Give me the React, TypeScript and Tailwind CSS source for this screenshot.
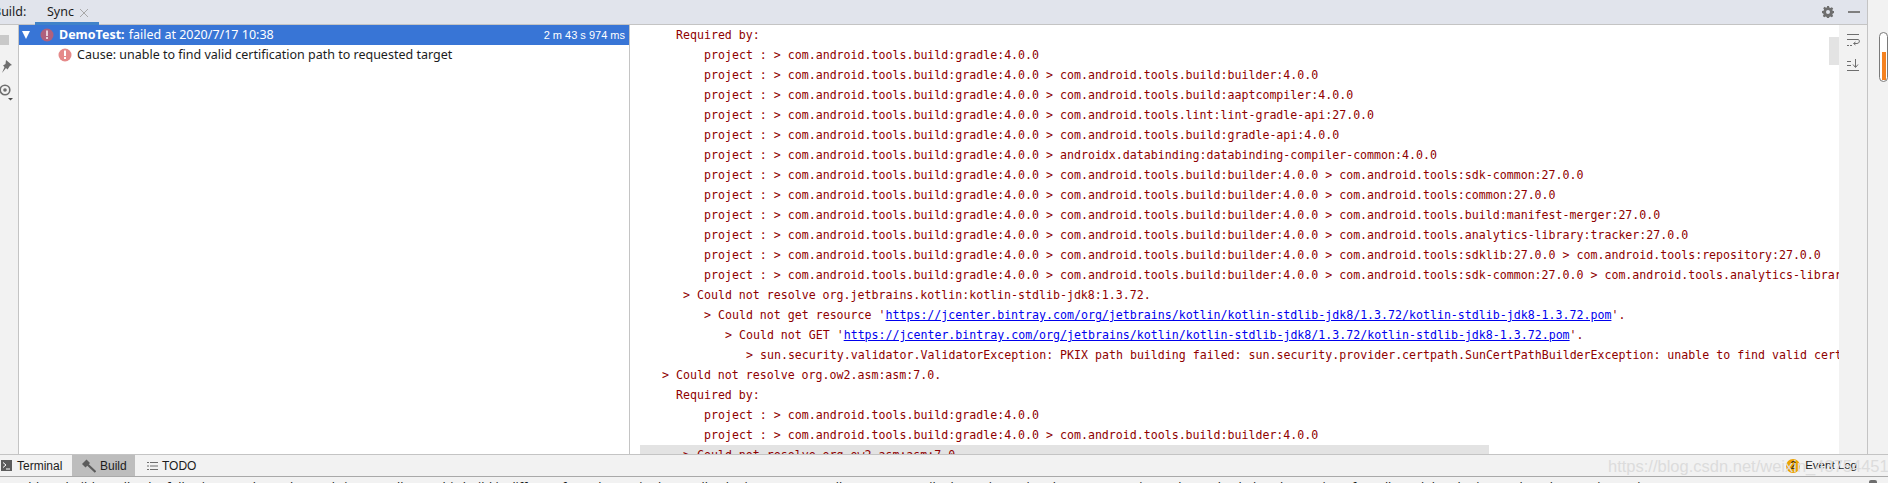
const gradle = 'project : > com.android.tools.build:gradle:4.0.0';
const builder = gradle + ' > com.android.tools.build:builder:4.0.0';
const pom = 'https://jcenter.bintray.com/org/jetbrains/kotlin/kotlin-stdlib-jdk8/1.3.72/kotlin-stdlib-jdk8-1.3.72.pom';

type Seg = { t: string; link?: boolean };

const lines: { indent: number; segs: Seg[] }[] = [
  { indent: 4, segs: [{ t: 'Required by:' }] },
  { indent: 8, segs: [{ t: gradle }] },
  { indent: 8, segs: [{ t: builder }] },
  { indent: 8, segs: [{ t: gradle + ' > com.android.tools.build:aaptcompiler:4.0.0' }] },
  { indent: 8, segs: [{ t: gradle + ' > com.android.tools.lint:lint-gradle-api:27.0.0' }] },
  { indent: 8, segs: [{ t: gradle + ' > com.android.tools.build:gradle-api:4.0.0' }] },
  { indent: 8, segs: [{ t: gradle + ' > androidx.databinding:databinding-compiler-common:4.0.0' }] },
  { indent: 8, segs: [{ t: builder + ' > com.android.tools:sdk-common:27.0.0' }] },
  { indent: 8, segs: [{ t: builder + ' > com.android.tools:common:27.0.0' }] },
  { indent: 8, segs: [{ t: builder + ' > com.android.tools.build:manifest-merger:27.0.0' }] },
  { indent: 8, segs: [{ t: builder + ' > com.android.tools.analytics-library:tracker:27.0.0' }] },
  { indent: 8, segs: [{ t: builder + ' > com.android.tools:sdklib:27.0.0 > com.android.tools:repository:27.0.0' }] },
  { indent: 8, segs: [{ t: builder + ' > com.android.tools:sdk-common:27.0.0 > com.android.tools.analytics-library:shared:27.0.0' }] },
  { indent: 5, segs: [{ t: '> Could not resolve org.jetbrains.kotlin:kotlin-stdlib-jdk8:1.3.72.' }] },
  { indent: 8, segs: [{ t: "> Could not get resource '" }, { t: pom, link: true }, { t: "'." }] },
  { indent: 11, segs: [{ t: "> Could not GET '" }, { t: pom, link: true }, { t: "'." }] },
  { indent: 14, segs: [{ t: '> sun.security.validator.ValidatorException: PKIX path building failed: sun.security.provider.certpath.SunCertPathBuilderException: unable to find valid certification path to requested target' }] },
  { indent: 2, segs: [{ t: '> Could not resolve org.ow2.asm:asm:7.0.' }] },
  { indent: 4, segs: [{ t: 'Required by:' }] },
  { indent: 8, segs: [{ t: gradle }] },
  { indent: 8, segs: [{ t: builder }] },
];

const ErrorIcon = ({ dim }: { dim?: boolean }) => (
  <svg width="14" height="14" viewBox="0 0 14 14" className="shrink-0">
    <circle cx="7" cy="7" r="6.500" fill={dim ? '#b0607c' : '#e58a8a'} />
    <rect x="6" y="2.500" width="2" height="5.500" fill="#fff" opacity={dim ? 0.7 : 1} />
    <rect x="6" y="9" width="2" height="2" fill="#fff" opacity={dim ? 0.7 : 1} />
  </svg>
);

export default function App() {
  return (
    <div className="w-[1888px] h-[483px] overflow-hidden flex flex-col bg-[#f2f2f2] font-['Noto_Sans',sans-serif] text-[12.500px] text-[#1c1c1c]">
      <div className="flex flex-1 min-h-0">
        <div className="w-[1868px] flex flex-col border-r border-[#c4c4c4]">
          {/* header */}
          <div className="h-[25px] shrink-0 flex items-center bg-[#e1e4ec] border-b border-[#c4c4c4]">
            <span className="ml-[-7px] w-[42px]">Build:</span>
            <div className="relative h-full w-[64px] flex items-center pl-[12px] gap-[6px]">
              <span>Sync</span>
              <svg width="8" height="8" viewBox="0 0 8 8" stroke="#a8a8a8" className="mt-[1px]"><path d="M0 0l8 8M8 0l-8 8" /></svg>
              <div className="absolute left-0 right-0 bottom-[-1px] h-[3px] bg-[#4083c9]" />
            </div>
            <div className="ml-auto flex items-center gap-[13px] pr-[7px]">
              <svg width="14" height="14" viewBox="0 0 14 14" fill="#6e6e6e">
                <path fillRule="evenodd" d="M6 1h2l.3 1.600 1.100.5 1.400-.9 1.400 1.400-.9 1.400.5 1.100L13 6v2l-1.200.4-.5 1.100.9 1.400-1.400 1.400-1.400-.9-1.100.5L8 13H6l-.3-1.100-1.100-.5-1.400.9-1.400-1.400.9-1.400-.5-1.100L1 8V6l1.600-.3.5-1.100-.9-1.400 1.400-1.400 1.400.9 1.100-.5zM7 5a2 2 0 100 4 2 2 0 000-4z" />
              </svg>
              <div className="w-[12px] h-[2px] bg-[#7f7f7f]" />
            </div>
          </div>

          <div className="flex flex-1 min-h-0">
            {/* left toolbar */}
            <div className="w-[19px] shrink-0 border-r border-[#c4c4c4] flex flex-col items-start pt-[10px] overflow-hidden">
              <div className="w-[9px] h-[10px] bg-[#c9c9c9]" />
              <svg width="12" height="14" viewBox="0 0 12 14" fill="#6e6e6e" className="mt-[15px]">
                <path d="M6 0l6 5-2 .8-2.500 3.700L6 8l-4 5 2.500-6L3 5.500l2.500-1.500z" />
              </svg>
              <svg width="16" height="17" viewBox="0 0 16 17" fill="none" className="mt-[10px] ml-[-2px] shrink-0">
                <circle cx="7" cy="6" r="4.800" stroke="#6e6e6e" strokeWidth="1.600" />
                <circle cx="7" cy="6" r="1.800" fill="#6e6e6e" />
                <path d="M10 14h5l-2.500 2.500z" fill="#4a4a4a" />
              </svg>
            </div>

            {/* tree */}
            <div className="w-[611px] shrink-0 bg-white border-r border-[#c4c4c4]">
              <div className="h-[20px] bg-[#3875d6] text-white flex items-center">
                <span className="ml-[3px] w-0 h-0 border-x-[4.500px] border-x-transparent border-t-[8px] border-t-white" />
                <span className="ml-[10px]"><ErrorIcon dim /></span>
                <span className="ml-[5px] font-bold">DemoTest:</span>
                <span className="ml-[4px]">failed at 2020/7/17 10:38</span>
                <span className="ml-auto pr-[4px] text-[11px] font-['Liberation_Sans',sans-serif]">2 m 43 s 974 ms</span>
              </div>
              <div className="h-[20px] flex items-center pl-[39px] gap-[5px]">
                <ErrorIcon />
                <span>Cause: unable to find valid certification path to requested target</span>
              </div>
            </div>

            {/* console */}
            <div className="flex-1 min-w-0 bg-white relative overflow-hidden pl-[18px] font-['DejaVu_Sans_Mono',monospace] text-[11.600px] text-[#8f0000]">
              <div className="absolute right-0 top-[12px] w-[10px] h-[28px] bg-[#e3e3e3]" />
              {lines.map((l, i) => (
                <div key={i} className="h-[20px] leading-[20px] whitespace-pre overflow-hidden" style={{ paddingLeft: l.indent * 7 }}>
                  {l.segs.map((s, j) => (
                    <span key={j} className={s.link ? 'text-[#0000ee] underline' : ''}>{s.t}</span>
                  ))}
                </div>
              ))}
              <div className="ml-[-8px] pl-[43px] w-[849px] h-[20px] leading-[20px] whitespace-pre bg-[#e3e3e3]">&gt; Could not resolve org.ow2.asm:asm:7.0.</div>
            </div>

            {/* console toolbar */}
            <div className="w-[28px] shrink-0 flex flex-col items-center pt-[8px] gap-[11px]">
              <svg width="14" height="14" viewBox="0 0 14 14" fill="none" stroke="#6e6e6e">
                <path d="M1 1.500h12M1 6.500h11c2 0 2 4-1 4H8M9.500 9l-2 1.500 2 1.500M1 12.500h2M4 12.500h2" />
              </svg>
              <svg width="14" height="14" viewBox="0 0 14 14" fill="none" stroke="#6e6e6e">
                <path d="M1 3.500h4M1 7.500h4M1 12.500h12M9.500 1v8M7 6.500l2.500 3 2.500-3" />
              </svg>
            </div>
          </div>
        </div>

        {/* side strip with the memory indicator */}
        <div className="flex-1 pt-[32px] pl-[11px]">
          <div className="w-[9px] h-[50px] rounded-full border border-[#7a7a7a] bg-white pt-[19px] px-[1.500px] pb-[1px]">
            <div className="w-[4px] h-full bg-[#f58220]" />
          </div>
        </div>
      </div>

      {/* tool window bar */}
      <div className="h-[21px] box-content shrink-0 flex items-center border-t border-[#c4c4c4] border-b border-b-[#a9a9a9] font-['Liberation_Sans',sans-serif] text-[12px]">
        <div className="flex items-center h-full pl-[1px] w-[72px] gap-[5px]">
          <svg width="11" height="11" viewBox="0 0 11 11"><rect width="11" height="11" fill="#5c5c5c" /><path d="M2 2.500l3 2.500-3 2.500M5 9h4" stroke="#fff" fill="none" /></svg>
          <span>Terminal</span>
        </div>
        <div className="flex items-center h-full w-[63px] bg-[#bdbdbd] pl-[10px] gap-[4px]">
          <svg width="14" height="14" viewBox="0 0 14 14" fill="#5c5c5c">
            <path d="M0 5l4.500-4.500L8 4 3.500 8.500z" />
            <path d="M5 5l8.500 8" stroke="#5c5c5c" strokeWidth="2.200" />
          </svg>
          <span>Build</span>
        </div>
        <div className="flex items-center h-full pl-[12px] gap-[4px]">
          <svg width="11" height="10" viewBox="0 0 11 10" fill="none" stroke="#6e6e6e"><path d="M0 1.500h2M3 1.500h8M0 5h2M3 5h8M0 8.500h2M3 8.500h8" /></svg>
          <span>TODO</span>
        </div>
        <div className="ml-auto flex items-center gap-[5px] pr-[31px] text-[11.500px]">
          <span className="w-[14px] h-[14px] rounded-full bg-[#eda200] text-[10px] leading-[14px] text-center">2</span>
          <span>Event Log</span>
        </div>
      </div>

      {/* status bar, cut off by the bottom of the capture */}
      <div className="h-[6px] shrink-0 overflow-hidden flex text-[12.500px] leading-[21px] whitespace-nowrap">
        <span className="w-[1728px] pl-[5px] overflow-hidden">Could not build Gradle: the following APIs have changed since Gradle 4.7; this build is different from the API in the Gradle plugin 4.0.0, so Gradle cannot compile the project using the current settings; please check that the version of Gradle and the plugin match and try again (3 minutes ago)</span>
        <span className="text-[#9a9a9a] pl-[5px]">UTF-8</span>
        <span className="ml-auto mr-[11px] mt-[3px] w-[8px] h-[8px] rounded-[2px] bg-[#6e6e6e]" />
      </div>

      {/* CSDN watermark burned into the screenshot */}
      <span className="absolute left-[1608px] top-[454px] text-[16.500px] font-['Liberation_Sans',sans-serif] whitespace-nowrap text-[#dcdcdc]">https://blog.csdn.net/weixin_43754451</span>
    </div>
  );
}
